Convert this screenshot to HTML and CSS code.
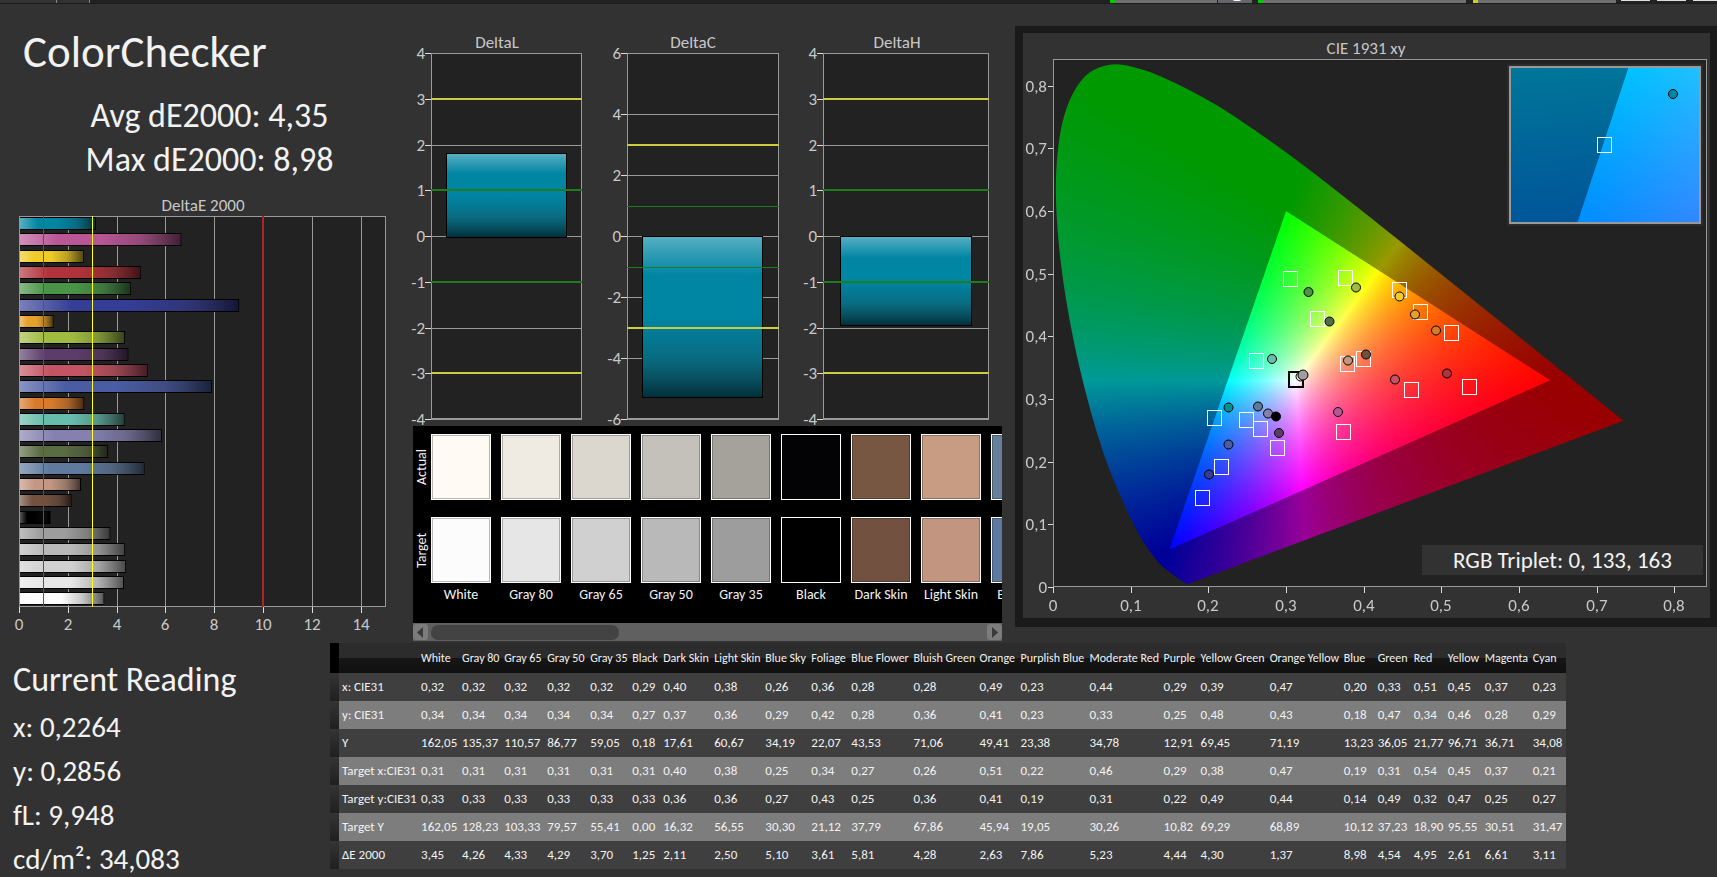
FILE: index.html
```html
<!DOCTYPE html>
<html lang="en">
<head>
<meta charset="utf-8">
<title>ColorChecker</title>
<link rel="stylesheet" href="styles.css">
</head>
<body>
<div class="toolbar" aria-hidden="true">
  <svg viewBox="0 0 1717 4" preserveAspectRatio="none">
    <rect width="1717" height="3" fill="#222"/><rect width="90" height="3" fill="#323232"/>
    <rect x="56" width="1" height="3" fill="#888"/><rect x="89" width="1" height="3" fill="#888"/>
    <rect y="3" width="1717" height="1" fill="#1c1c1c"/>
    <rect x="1110" width="5" height="3" fill="#0c0"/><rect x="1115" width="102" height="3" fill="#707070"/>
    <rect x="1218" width="34" height="3" fill="#66666c"/><ellipse cx="1237" cy="0" rx="4" ry="1" fill="#fff"/>
    <rect x="1258" width="6" height="3" fill="#0c0"/><rect x="1264" width="202" height="3" fill="#707070"/>
    <rect x="1473" width="5" height="3" fill="#cc2"/><rect x="1478" width="138" height="3" fill="#707070"/>
    <rect x="1621" width="29" height="1" fill="#ddd"/><rect x="1657" width="29" height="1" fill="#ddd"/><rect x="1693" width="24" height="1" fill="#ddd"/>
  </svg>
</div>
<main class="upper">
  <section class="summary">
    <h1>ColorChecker</h1>
    <p class="stat">Avg dE2000: 4,35</p>
    <p class="stat">Max dE2000: 8,98</p>
    <svg id="deltaE" class="chart" viewBox="0 190 413 450" role="img" aria-label="DeltaE 2000"></svg>
  </section>
  <section class="middle">
    <svg id="deltas" class="chart" viewBox="413 4 589 422" role="img" aria-label="DeltaL, DeltaC, DeltaH"></svg>
    <div class="swatches">
      <div class="sides"><span>Actual</span><span>Target</span></div>
      <div class="pair"><i class="sw white-a"></i><i class="sw white-t"></i><span>White</span></div>
      <div class="pair"><i class="sw g80-a"></i><i class="sw g80-t"></i><span>Gray 80</span></div>
      <div class="pair"><i class="sw g65-a"></i><i class="sw g65-t"></i><span>Gray 65</span></div>
      <div class="pair"><i class="sw g50-a"></i><i class="sw g50-t"></i><span>Gray 50</span></div>
      <div class="pair"><i class="sw g35-a"></i><i class="sw g35-t"></i><span>Gray 35</span></div>
      <div class="pair"><i class="sw black-a"></i><i class="sw black-t"></i><span>Black</span></div>
      <div class="pair"><i class="sw dark-a"></i><i class="sw dark-t"></i><span>Dark Skin</span></div>
      <div class="pair"><i class="sw light-a"></i><i class="sw light-t"></i><span>Light Skin</span></div>
      <div class="pair"><i class="sw sky-a"></i><i class="sw sky-t"></i><span>Blue Sky</span></div>
    </div>
    <div class="scrollbar">
      <button type="button" aria-label="Scroll left"><svg viewBox="0 0 14 15"><path d="M10 2v11L4 7.500z"/></svg></button>
      <div class="track"><div class="thumb"></div></div>
      <button type="button" aria-label="Scroll right"><svg viewBox="0 0 14 15"><path d="M5 2v11l6-5.500z"/></svg></button>
    </div>
  </section>
  <section class="cie">
    <svg id="cie" class="chart" viewBox="1002 4 715 636" role="img" aria-label="CIE 1931 xy"></svg>
  </section>
</main>
<div class="lower">
  <section class="reading">
    <h2>Current Reading</h2>
    <p>x: 0,2264</p>
    <p>y: 0,2856</p>
    <p>fL: 9,948</p>
    <p>cd/m²: 34,083</p>
  </section>
  <div class="data">
    <table>
      <thead><tr><td></td><td></td><th>White</th><th>Gray 80</th><th>Gray 65</th><th>Gray 50</th><th>Gray 35</th><th>Black</th><th>Dark Skin</th><th>Light Skin</th><th>Blue Sky</th><th>Foliage</th><th>Blue Flower</th><th>Bluish Green</th><th>Orange</th><th>Purplish Blue</th><th>Moderate Red</th><th>Purple</th><th>Yellow Green</th><th>Orange Yellow</th><th>Blue</th><th>Green</th><th>Red</th><th>Yellow</th><th>Magenta</th><th>Cyan</th></tr></thead>
      <tbody>
        <tr><td></td><th>x: CIE31</th><td>0,32</td><td>0,32</td><td>0,32</td><td>0,32</td><td>0,32</td><td>0,29</td><td>0,40</td><td>0,38</td><td>0,26</td><td>0,36</td><td>0,28</td><td>0,28</td><td>0,49</td><td>0,23</td><td>0,44</td><td>0,29</td><td>0,39</td><td>0,47</td><td>0,20</td><td>0,33</td><td>0,51</td><td>0,45</td><td>0,37</td><td>0,23</td></tr>
        <tr><td></td><th>y: CIE31</th><td>0,34</td><td>0,34</td><td>0,34</td><td>0,34</td><td>0,34</td><td>0,27</td><td>0,37</td><td>0,36</td><td>0,29</td><td>0,42</td><td>0,28</td><td>0,36</td><td>0,41</td><td>0,23</td><td>0,33</td><td>0,25</td><td>0,48</td><td>0,43</td><td>0,18</td><td>0,47</td><td>0,34</td><td>0,46</td><td>0,28</td><td>0,29</td></tr>
        <tr><td></td><th>Y</th><td>162,05</td><td>135,37</td><td>110,57</td><td>86,77</td><td>59,05</td><td>0,18</td><td>17,61</td><td>60,67</td><td>34,19</td><td>22,07</td><td>43,53</td><td>71,06</td><td>49,41</td><td>23,38</td><td>34,78</td><td>12,91</td><td>69,45</td><td>71,19</td><td>13,23</td><td>36,05</td><td>21,77</td><td>96,71</td><td>36,71</td><td>34,08</td></tr>
        <tr><td></td><th>Target x:CIE31</th><td>0,31</td><td>0,31</td><td>0,31</td><td>0,31</td><td>0,31</td><td>0,31</td><td>0,40</td><td>0,38</td><td>0,25</td><td>0,34</td><td>0,27</td><td>0,26</td><td>0,51</td><td>0,22</td><td>0,46</td><td>0,29</td><td>0,38</td><td>0,47</td><td>0,19</td><td>0,31</td><td>0,54</td><td>0,45</td><td>0,37</td><td>0,21</td></tr>
        <tr><td></td><th>Target y:CIE31</th><td>0,33</td><td>0,33</td><td>0,33</td><td>0,33</td><td>0,33</td><td>0,33</td><td>0,36</td><td>0,36</td><td>0,27</td><td>0,43</td><td>0,25</td><td>0,36</td><td>0,41</td><td>0,19</td><td>0,31</td><td>0,22</td><td>0,49</td><td>0,44</td><td>0,14</td><td>0,49</td><td>0,32</td><td>0,47</td><td>0,25</td><td>0,27</td></tr>
        <tr><td></td><th>Target Y</th><td>162,05</td><td>128,23</td><td>103,33</td><td>79,57</td><td>55,41</td><td>0,00</td><td>16,32</td><td>56,55</td><td>30,30</td><td>21,12</td><td>37,79</td><td>67,86</td><td>45,94</td><td>19,05</td><td>30,26</td><td>10,82</td><td>69,29</td><td>68,89</td><td>10,12</td><td>37,23</td><td>18,90</td><td>95,55</td><td>30,51</td><td>31,47</td></tr>
        <tr><td></td><th>ΔE 2000</th><td>3,45</td><td>4,26</td><td>4,33</td><td>4,29</td><td>3,70</td><td>1,25</td><td>2,11</td><td>2,50</td><td>5,10</td><td>3,61</td><td>5,81</td><td>4,28</td><td>2,63</td><td>7,86</td><td>5,23</td><td>4,44</td><td>4,30</td><td>1,37</td><td>8,98</td><td>4,54</td><td>4,95</td><td>2,61</td><td>6,61</td><td>3,11</td></tr>
      </tbody>
    </table>
  </div>
</div>
<script src="charts.js"></script>
</body>
</html>
```
FILE: styles.css
```css
* { box-sizing: border-box; }
body {
  margin: 0;
  overflow: hidden;
  min-height: 100vh;
  background: #323232;
  color: #f2f2f2;
  font-family: Carlito, Calibri, Lato, sans-serif;
}
h1, h2, p { margin: 0; font-weight: 400; }
.toolbar { height: 4px; }
.toolbar svg { display: block; width: 100%; height: 100%; }
.upper { display: grid; grid-template-columns: minmax(0, 413fr) minmax(0, 589fr) minmax(0, 715fr); align-items: start; }
.chart { display: block; width: 100%; overflow: visible; }
.chart text { font-size: 17px; fill: #c8c8c8; }

.summary { padding-top: 21px; }
.summary h1 { padding-left: 23px; margin-bottom: 15px; font-size: 45px; line-height: 54px; }
.stat { padding-left: 6px; font-size: 34px; line-height: 44px; text-align: center; }
.summary .chart { margin-top: 8px; }

.swatches { display: flex; gap: 10px; height: 197px; padding-top: 8px; background: #000; overflow: hidden; }
.sides { display: flex; flex-direction: column; gap: 17px; width: 18px; margin-right: -10px; flex: none; }
.sides span { height: 66px; width: 18px; line-height: 18px; font-size: 14px; text-align: center; writing-mode: vertical-rl; rotate: 180deg; }
.pair { flex: none; width: 60px; display: flex; flex-direction: column; align-items: center; font-size: 14px; white-space: nowrap; line-height: 24px; }
.sw { width: 60px; height: 66px; border: 1px solid #fff; box-shadow: inset 0 0 0 1px #0004; }
.sw + .sw { margin-top: 17px; }
.white-a { background: #fffaf4; } .white-t { background: #fcfcfc; }
.g80-a { background: #efeae2; } .g80-t { background: #e6e6e6; }
.g65-a { background: #dbd7cf; } .g65-t { background: #d0d0d0; }
.g50-a { background: #c4c0ba; } .g50-t { background: #b9b9b9; }
.g35-a { background: #a4a29a; } .g35-t { background: #9d9d9d; }
.black-a { background: #030305; } .black-t { background: #000; }
.dark-a { background: #775642; } .dark-t { background: #735140; }
.light-a { background: #c79c82; } .light-t { background: #c29580; }
.sky-a { background: #67809a; } .sky-t { background: #5f7a9f; }

.scrollbar { display: flex; align-items: center; height: 18px; background: #606060; }
.scrollbar button { flex: none; width: 15px; height: 16px; padding: 0; border: 0; border-radius: 3px; background: #7c7c7c; }
.scrollbar svg { display: block; width: 14px; height: 15px; fill: #3a3a3a; }
.track { flex: 1; padding: 0 3px; }
.thumb { width: 34%; height: 15px; border-radius: 7px; background: #434343; }

.lower { display: grid; grid-template-columns: 330fr 1236fr 151fr; align-items: start; padding-top: 2px; }
.reading { padding: 12px 0 0 13px; font-size: 29px; line-height: 44px; }
.reading h2 { font-size: 34px; line-height: 50px; }

table { width: 100%; table-layout: fixed; border-collapse: collapse; font-size: 13px; }
th, td { height: 28px; padding: 0 0 0 3px; text-align: left; font-weight: 400; white-space: nowrap; line-height: 20px; }
thead th, thead td { height: 30px; font-size: 12px; }
thead tr { background: linear-gradient(#2c2c2c 50%, #161616 50%, #101010); }
thead td:first-child { background: #000; }
tbody tr { background: #3f3f3f; }
tbody tr:nth-child(even) { background: #7d7d7d; }
tbody td:first-child { background: linear-gradient(#343434, #202020); }
thead tr > :nth-child(1) { width: 9px; }
thead tr > :nth-child(2) { width: 79px; }
thead tr > :nth-child(3) { width: 41px; }
thead tr > :nth-child(4) { width: 42px; }
thead tr > :nth-child(5) { width: 43px; }
thead tr > :nth-child(6) { width: 43px; }
thead tr > :nth-child(7) { width: 42px; }
thead tr > :nth-child(8) { width: 31px; }
thead tr > :nth-child(9) { width: 51px; }
thead tr > :nth-child(10) { width: 51px; }
thead tr > :nth-child(11) { width: 46px; }
thead tr > :nth-child(12) { width: 40px; }
thead tr > :nth-child(13) { width: 62px; }
thead tr > :nth-child(14) { width: 66px; }
thead tr > :nth-child(15) { width: 41px; }
thead tr > :nth-child(16) { width: 69px; }
thead tr > :nth-child(17) { width: 74px; }
thead tr > :nth-child(18) { width: 37px; }
thead tr > :nth-child(19) { width: 69px; }
thead tr > :nth-child(20) { width: 74px; }
thead tr > :nth-child(21) { width: 34px; }
thead tr > :nth-child(22) { width: 36px; }
thead tr > :nth-child(23) { width: 34px; }
thead tr > :nth-child(24) { width: 37px; }
thead tr > :nth-child(25) { width: 48px; }
thead tr > :nth-child(26) { width: 36px; }
.chart .triplet { font-size: 23px; fill: #f2f2f2; }
.field { display: block; width: 100%; height: 100%; }
```
FILE: charts.js
```js
const NS = 'http://www.w3.org/2000/svg';
function add(parent, name, attrs, text) {
  const el = document.createElementNS(NS, name);
  for (const k in attrs) el.setAttribute(k, attrs[k]);
  if (text !== undefined) el.textContent = text;
  parent.append(el);
  return el;
}
const rect = (p, x, y, w, h, fill, more) => add(p, 'rect', { x, y, width: w, height: h, fill, ...more });
const label = (p, x, y, t, anchor = 'middle') => add(p, 'text', { x, y, 'text-anchor': anchor }, t);

function sheen(svg, id, dir) {
  const g = add(add(svg, 'defs', {}), 'linearGradient', { id, x1: 0, y1: 0, x2: dir === 'x' ? 1 : 0, y2: dir === 'x' ? 0 : 1 });
  [[0, '#fff', 0.34], [0.24, '#fff', 0], [0.5, '#222', 0], [0.75, '#222', 0.25], [1, '#000', 0.64]].forEach(([o, c, a]) =>
    add(g, 'stop', { offset: o, 'stop-color': c, 'stop-opacity': a }));
}

/* DeltaE 2000 per patch */
{
  const s = document.getElementById('deltaE');
  sheen(s, 'sheenX', 'x');
  const x0 = 19, u = 24.4, top = 216, bottom = 607;
  label(s, 203, 211, 'DeltaE 2000');
  rect(s, x0, top, 15 * u, bottom - top, '#222');
  for (let v = 0; v <= 14; v += 2) {
    const x = Math.round(x0 + v * u);
    rect(s, x, top, 1, bottom - top, '#999');
    rect(s, x, bottom, 1, 6, '#ddd');
    label(s, x, 630, v);
  }
  [[3.11, '#0085a3'], [6.61, '#b95696'], [2.61, '#eecb27'], [4.95, '#b0323a'], [4.54, '#4a9448'], [8.98, '#353e96'],
   [1.37, '#e6a12c'], [4.3, '#9fbc41'], [4.44, '#5d3c6b'], [5.23, '#c35463'], [7.86, '#4a5ca4'], [2.63, '#d97a2b'],
   [4.28, '#66bdab'], [5.81, '#8480b0'], [3.61, '#5a6c42'], [5.1, '#5f7a9d'], [2.5, '#c49782'], [2.11, '#73513f'],
   [1.25, '#000'], [3.7, '#9d9d9d'], [4.29, '#b9b9b9'], [4.33, '#d0d0d0'], [4.26, '#e6e6e6'], [3.45, '#fcfcfc']
  ].forEach(([v, c], i) => {
    const y = Math.round(217 + i * 16.32);
    rect(s, x0 + 1, y, v * u, 13, '#000');
    rect(s, x0 + 1, y + 1, v * u - 1, 11, c);
    rect(s, x0 + 1, y + 1, v * u - 1, 11, 'url(#sheenX)');
  });
  rect(s, 19.5, 216.5, 366, 390, 'none', { stroke: '#999' });
  rect(s, 43, top, 1, bottom - top, '#0a8a0a');
  rect(s, 92, top, 1, bottom - top, '#ffff20');
  rect(s, 262, top, 2, bottom - top, '#b02424');
}

/* DeltaL, DeltaC, DeltaH */
{
  const s = document.getElementById('deltas');
  sheen(s, 'sheenY', 'y');
  [{ t: 'DeltaL', tx: 497, x: 431, r: 582, max: 4, step: 1, bx: 446, br: 567, y1: 153, y2: 238 },
   { t: 'DeltaC', tx: 693, x: 627, r: 779, max: 6, step: 2, bx: 642, br: 763, y1: 236, y2: 398 },
   { t: 'DeltaH', tx: 897, x: 823, r: 989, max: 4, step: 1, bx: 840, br: 972, y1: 236, y2: 326 }
  ].forEach(d => {
    const w = d.r - d.x, k = 183 / d.max, Y = v => Math.round(236 - v * k);
    label(s, d.tx, 48, d.t);
    rect(s, d.x, 53, w, 366, '#222');
    for (let v = -d.max; v <= d.max; v += d.step) {
      rect(s, d.x, Y(v), w, 1, '#999');
      rect(s, d.x - 6, Y(v), 6, 1, '#ddd');
      label(s, d.x - 6, Y(v) + 6, v, 'end');
    }
    rect(s, d.x + 0.5, 53.5, w - 1, 365, 'none', { stroke: '#999' });
    rect(s, d.bx, d.y1, d.br - d.bx, d.y2 - d.y1, '#000');
    rect(s, d.bx + 1, d.y1 + 1, d.br - d.bx - 2, d.y2 - d.y1 - 2, '#0085a3');
    rect(s, d.bx + 1, d.y1 + 1, d.br - d.bx - 2, d.y2 - d.y1 - 2, 'url(#sheenY)');
    [1, -1].forEach(v => rect(s, d.x, Y(v) - (d.step === 1 ? 1 : 0), w, d.step === 1 ? 2 : 1, '#1f7d1f'));
    [3, -3].forEach(v => rect(s, d.x, Y(v) - 1, w, 2, '#cccc40'));
  });
}

/* CIE 1931 chromaticity */
const RED = [0.64, 0.33], GREEN = [0.3, 0.6], BLUE = [0.15, 0.06];
const side = (p, q, x, y) => (q[0] - p[0]) * (y - p[1]) - (q[1] - p[1]) * (x - p[0]);
function colour(x, y) {
  y = Math.max(y, 1e-4);
  const X = x / y, Z = (1 - x - y) / y;
  const lin = [3.2406 * X - 1.5372 - 0.4986 * Z, -0.9689 * X + 1.8758 + 0.0415 * Z, 0.0557 * X - 0.204 + 1.057 * Z].map(c => Math.max(c, 0));
  const m = Math.max(...lin);
  const inside = side(RED, GREEN, x, y) >= 0 && side(GREEN, BLUE, x, y) >= 0 && side(BLUE, RED, x, y) >= 0;
  return lin.map(c => (inside ? 255 : 153) * c / m);
}
function paint(svg, box, toXY, outline) {
  const fo = add(svg, 'foreignObject', { x: box[0], y: box[1], width: box[2], height: box[3] });
  const c = document.createElement('canvas');
  c.className = 'field';
  c.width = box[2] * 2; c.height = box[3] * 2;
  fo.append(c);
  const g = c.getContext('2d'), img = g.createImageData(c.width, c.height);
  for (let j = 0, n = 0; j < c.height; j++) for (let i = 0; i < c.width; i++, n += 4) {
    const [r, gr, b] = colour(...toXY((i + 0.5) / 2, (j + 0.5) / 2));
    img.data[n] = r; img.data[n + 1] = gr; img.data[n + 2] = b; img.data[n + 3] = 255;
  }
  g.putImageData(img, 0, 0);
  if (outline) {
    g.globalCompositeOperation = 'destination-in';
    g.beginPath();
    const p = outline.map(([a, b]) => [a * 2, b * 2]), last = p.length - 1;
    g.moveTo(...p[0]);
    for (let i = 0; i < last; i++) {
      const a = p[Math.max(i - 1, 0)], b = p[i], d = p[i + 1], e = p[Math.min(i + 2, last)];
      g.bezierCurveTo(b[0] + (d[0] - a[0]) / 6, b[1] + (d[1] - a[1]) / 6, d[0] - (e[0] - b[0]) / 6, d[1] - (e[1] - b[1]) / 6, ...d);
    }
    g.closePath();
    g.fill();
  }
}
{
  const s = document.getElementById('cie');
  const ux = 776.8, uy = 626.5;
  rect(s, 1015, 26, 702, 601, '#1a1a1a');
  rect(s, 1023, 33, 687, 585, '#323232');
  rect(s, 1053, 59, 654, 528, '#222');
  label(s, 1366, 54, 'CIE 1931 xy');
  const locus = [[.1741, .005], [.1714, .0051], [.1689, .0069], [.1644, .0109], [.1566, .0177], [.144, .0297], [.1355, .0399],
    [.1241, .0578], [.1096, .0868], [.0913, .1327], [.0687, .2007], [.0454, .295], [.0235, .4127], [.0082, .5384], [.0039, .6548],
    [.0139, .7502], [.0389, .812], [.0743, .8338], [.1142, .8262], [.1547, .8059], [.1929, .7816], [.2296, .7543], [.3016, .6923],
    [.3731, .6245], [.4441, .5547], [.5125, .4866], [.5752, .4242], [.627, .3725], [.6658, .334], [.6915, .3083], [.719, .2809], [.7347, .2653]];
  paint(s, [1053, 59, 654, 528], (i, j) => [i / ux, (528 - j) / uy], locus.map(([x, y]) => [x * ux, 528 - y * uy]));
  rect(s, 1053.5, 59.5, 653, 527, 'none', { stroke: '#999' });
  for (let v = 0; v <= 8; v++) {
    const t = v ? '0,' + v : '0', x = Math.round(1053 + v * ux / 10), y = Math.round(587 - v * uy / 10);
    rect(s, x, 587, 1, 6, '#ddd');
    rect(s, 1048, y, 5, 1, '#ddd');
    label(s, x, 611, t);
    label(s, 1047, y + 6, t, 'end');
  }
  const square = (x, y, stroke = '#fff', sw = 1) => add(s, 'rect', { x: Math.round(x - 7.5) + (sw % 2) / 2, y: Math.round(y - 7.5) + (sw % 2) / 2, width: 14, height: 15, fill: 'none', stroke, 'stroke-width': sw });
  const dot = (x, y, fill, r = 4.5) => add(s, 'circle', { cx: x, cy: y + 0.5, r, fill, stroke: '#000', 'stroke-width': 1 });
  [[1290, 278], [1345, 277], [1317, 318], [1399.5, 289], [1420.5, 311], [1451.5, 332], [1256.5, 360], [1347.5, 363], [1363, 358],
   [1411.5, 389.5], [1469.5, 386.5], [1214.5, 417.5], [1246.5, 419], [1260.5, 428], [1277.5, 447], [1343.5, 431], [1221.5, 466.5], [1202, 497.5]
  ].forEach(p => square(...p));
  square(1296.5, 379.5, '#000', 2);
  [[1308.5, 291.5, '#4a9448'], [1356, 287, '#9fbc41'], [1329.5, 321, '#4f6c42'], [1399.5, 296, '#eecb27'], [1415, 314, '#e6a12c'],
   [1436, 330, '#d97a2b'], [1272, 358.5, '#66bdab'], [1348, 360, '#c49782'], [1366, 354, '#73513f'], [1395, 379, '#c35463'],
   [1447, 373, '#b0323a'], [1228.5, 407, '#009090'], [1258, 406, '#5f7a9d'], [1268, 413, '#8480b0'], [1276, 416, '#000'],
   [1279, 432.5, '#5d3c6b'], [1338, 411.5, '#b95696'], [1228.5, 444, '#4a5ca4'], [1209, 474, '#353e96'], [1300.5, 376, '#d8d8d8']
  ].forEach(p => dot(...p));
  dot(1303, 374.5, '#9d9d9d', 5);

  rect(s, 1507, 64, 196, 162, '#2c2c2c');
  paint(s, [1510, 67, 190, 156], (i, j) => [0.2091 + (i - 94) / 4500, 0.2722 + (77 - j) / 3800]);
  rect(s, 1510, 67, 190, 156, 'none', { stroke: '#999', 'stroke-width': 2 });
  square(1604, 144);
  dot(1673, 93.5, '#0085a3');
  rect(s, 1422, 545, 281, 30, '#323232');
  add(s, 'text', { class: 'triplet', x: 1562.5, y: 568, 'text-anchor': 'middle' }, 'RGB Triplet: 0, 133, 163');
}
```
